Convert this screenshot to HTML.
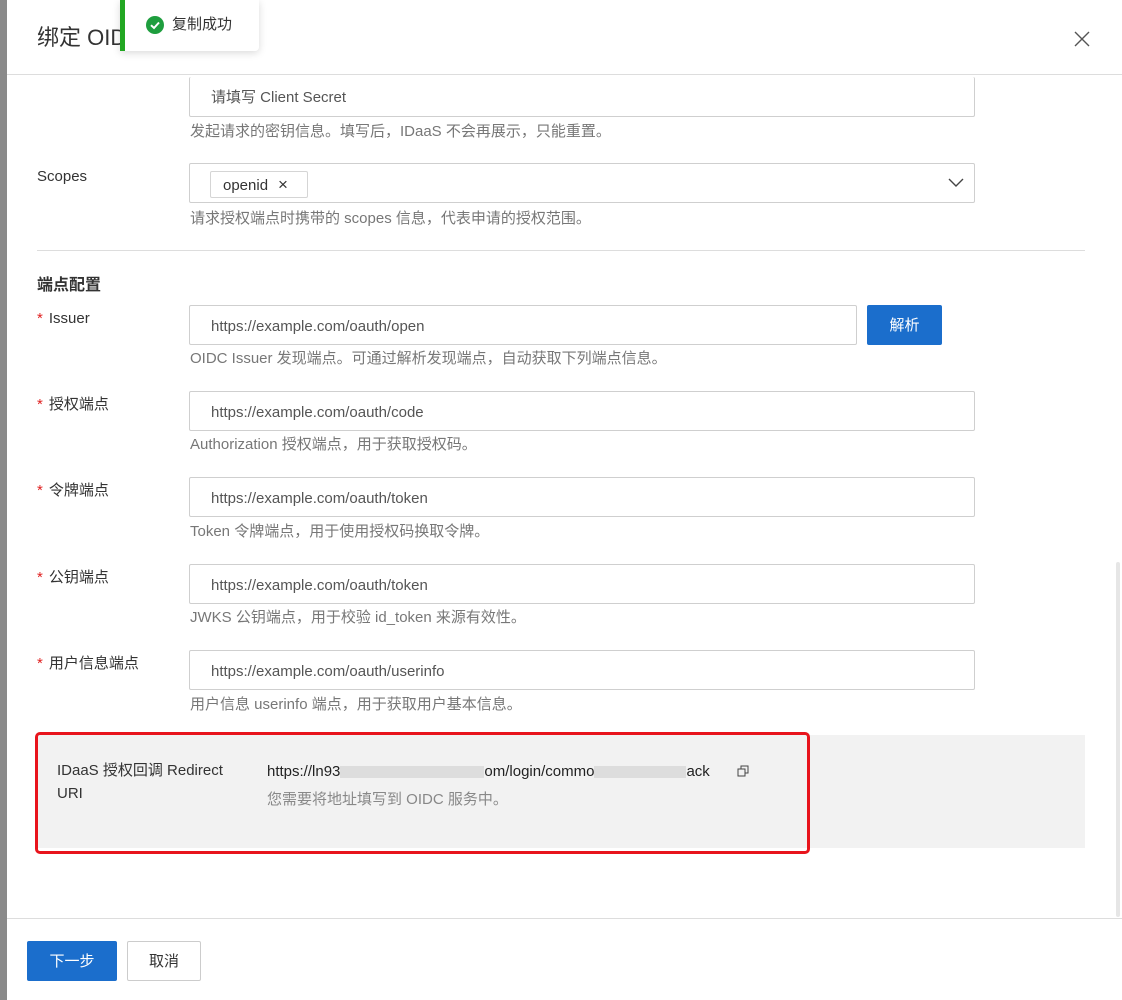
<!DOCTYPE html>
<html><head><meta charset="utf-8"><style>
*{box-sizing:border-box;margin:0;padding:0}
body{width:1122px;height:1000px;overflow:hidden;background:#fff;font-family:"Liberation Sans","Noto Sans CJK SC",sans-serif;color:#333;font-size:15px;position:relative}
.abs{position:absolute}
.inp{position:absolute;left:189px;width:786px;height:40px;border:1px solid #cfcfcf;border-radius:2px;background:#fff;padding-left:21px;padding-top:2px;line-height:38px;color:#555;font-size:15px}
.help{position:absolute;left:190px;color:#777;font-size:15px;line-height:18px;white-space:nowrap}
.lbl{position:absolute;left:37px;font-size:15px;color:#333;line-height:18px}
.req{color:#e02020;margin-right:6px}
.blur{display:inline-block;height:12px;background:#ddd;vertical-align:middle}
</style></head><body>
<div class="abs" style="left:0;top:0;width:7px;height:1000px;background:#8a8a8a"></div>
<div class="abs" style="left:7px;top:0;width:1115px;height:1000px;background:#fff"></div>
<div class="abs" style="left:37px;top:22px;font-size:22px;color:#333;line-height:32px">绑定 OIDC 身份提供方</div>
<svg class="abs" style="left:1074px;top:31px" width="16" height="16" viewBox="0 0 16 16"><path d="M1 1L15 15M15 1L1 15" stroke="#555" stroke-width="1.4"/></svg>
<div class="abs" style="left:7px;top:74px;width:1115px;height:1px;background:#ddd"></div>

<div class="abs" style="left:120px;top:0;width:139px;height:51px;background:#fff;border-left:5px solid #22a722;border-radius:0 0 4px 0;box-shadow:0 2px 8px rgba(0,0,0,.15)"></div>
<svg class="abs" style="left:146px;top:16px" width="18" height="18" viewBox="0 0 18 18"><circle cx="9" cy="9" r="9" fill="#1e9e3e"/><path d="M5 9.2L8 12L13 6.5" stroke="#fff" stroke-width="2" fill="none"/></svg>
<div class="abs" style="left:172px;top:15px;font-size:15px;line-height:20px;color:#333">复制成功</div>

<div class="inp" style="top:77px;height:40px;border-top:none;overflow:hidden;padding-top:0"><span style="position:relative;top:2px">请填写 Client Secret</span></div>
<div class="help" style="top:123px">发起请求的密钥信息。填写后，IDaaS 不会再展示，只能重置。</div>

<div class="lbl" style="top:168px">Scopes</div>
<div class="inp" style="top:163px;padding-left:0;padding-top:0">
<div class="abs" style="left:20px;top:7px;width:98px;height:27px;border:1px solid #d5d5d5;border-radius:2px;line-height:25px;padding-left:12px;color:#333">openid<span style="margin-left:10px;font-size:17px">×</span></div>
<svg class="abs" style="left:758px;top:14px" width="16" height="10" viewBox="0 0 16 10"><path d="M1 1L8 8L15 1" stroke="#444" stroke-width="1.4" fill="none"/></svg>
</div>
<div class="help" style="top:210px">请求授权端点时携带的 scopes 信息，代表申请的授权范围。</div>
<div class="abs" style="left:37px;top:250px;width:1048px;height:1px;background:#ddd"></div>

<div class="lbl" style="top:276px;font-size:16px;font-weight:bold;line-height:20px">端点配置</div>

<div class="lbl" style="top:310px"><span class="req">*</span>Issuer</div>
<div class="inp" style="top:305px;width:668px">https://example.com/oauth/open</div>
<div class="abs" style="left:867px;top:305px;width:75px;height:40px;background:#1b6ecc;border-radius:2px;color:#fff;text-align:center;line-height:41px;font-size:15px">解析</div>
<div class="help" style="top:350px">OIDC Issuer 发现端点。可通过解析发现端点，自动获取下列端点信息。</div>

<div class="lbl" style="top:396px"><span class="req">*</span>授权端点</div>
<div class="inp" style="top:391px">https://example.com/oauth/code</div>
<div class="help" style="top:436px">Authorization 授权端点，用于获取授权码。</div>

<div class="lbl" style="top:482px"><span class="req">*</span>令牌端点</div>
<div class="inp" style="top:477px">https://example.com/oauth/token</div>
<div class="help" style="top:523px">Token 令牌端点，用于使用授权码换取令牌。</div>

<div class="lbl" style="top:569px"><span class="req">*</span>公钥端点</div>
<div class="inp" style="top:564px">https://example.com/oauth/token</div>
<div class="help" style="top:609px">JWKS 公钥端点，用于校验 id_token 来源有效性。</div>

<div class="lbl" style="top:655px"><span class="req">*</span>用户信息端点</div>
<div class="inp" style="top:650px">https://example.com/oauth/userinfo</div>
<div class="help" style="top:696px">用户信息 userinfo 端点，用于获取用户基本信息。</div>

<div class="abs" style="left:37px;top:735px;width:1048px;height:113px;background:#f2f2f2"></div>
<div class="abs" style="left:35px;top:732px;width:775px;height:122px;border:3px solid #e8141c;border-radius:5px"></div>
<div class="abs" style="left:57px;top:759px;font-size:15px;line-height:23px;color:#333;width:185px">IDaaS 授权回调 Redirect URI</div>
<div class="abs" style="left:267px;top:762px;font-size:15px;line-height:20px;color:#222;white-space:nowrap">https://ln93<span class="blur" style="width:144px"></span>om/login/commo<span class="blur" style="width:92px"></span>ack</div>
<svg class="abs" style="left:737px;top:765px" width="12" height="12" viewBox="0 0 12 12"><rect x="1" y="4" width="7" height="7" fill="none" stroke="#444"/><path d="M4 4V1H11V8H8" fill="none" stroke="#444"/></svg>
<div class="abs" style="left:267px;top:790px;font-size:15px;line-height:20px;color:#888">您需要将地址填写到 OIDC 服务中。</div>

<div class="abs" style="left:1116px;top:562px;width:4px;height:355px;background:#e6e6e6;border-radius:2px"></div>
<div class="abs" style="left:7px;top:918px;width:1115px;height:1px;background:#ddd"></div>
<div class="abs" style="left:27px;top:941px;width:90px;height:40px;background:#1b6ecc;border-radius:2px;color:#fff;text-align:center;line-height:41px;font-size:15px">下一步</div>
<div class="abs" style="left:127px;top:941px;width:74px;height:40px;border:1px solid #ccc;border-radius:2px;color:#333;text-align:center;line-height:39px;font-size:15px">取消</div>
</body></html>
